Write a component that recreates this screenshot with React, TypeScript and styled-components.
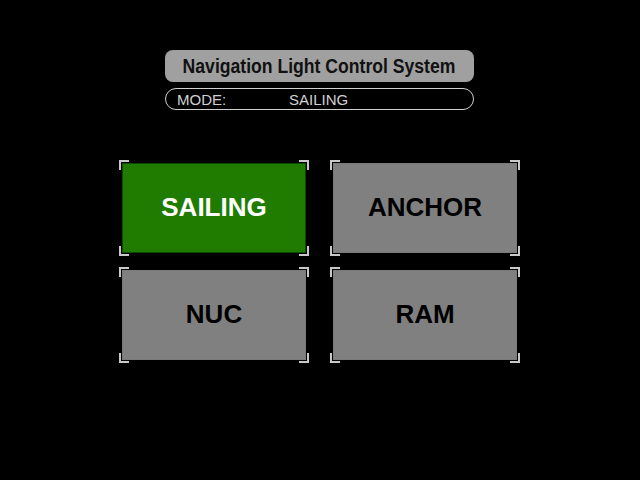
import styled, { createGlobalStyle } from "styled-components";

const GlobalStyle = createGlobalStyle`
    html, body {
        margin: 0;
        padding: 0;
        background: #000;
    }
    body {
        font-family: "Liberation Sans", Arial, sans-serif;
    }
`;

const Screen = styled.div`
    width: 640px;
    height: 480px;
    background: #000;
    display: flex;
    flex-direction: column;
    align-items: center;
    padding-top: 50px;
    box-sizing: border-box;
`;

const Header = styled.div`
    width: 309px;
    margin-right: 1px;
    display: flex;
    flex-direction: column;
    gap: 6px;
`;

const TitleBar = styled.div`
    height: 32px;
    border-radius: 8px;
    background: #a0a0a0;
    display: flex;
    align-items: center;
    justify-content: center;
    overflow: hidden;
`;

// no condensed face installed, so squeeze the bold sans
const TitleText = styled.span`
    display: inline-block;
    white-space: nowrap;
    font-family: "Liberation Sans", Arial, sans-serif;
    font-weight: 700;
    font-size: 20px;
    color: #111;
    transform: scaleX(0.88);
`;

const ModeBar = styled.div`
    height: 22px;
    box-sizing: border-box;
    border: 1px solid #d0d0d0;
    border-radius: 11px;
    display: flex;
    align-items: center;
    padding-left: 11px;
    font-size: 15px;
    color: #d0d0d0;
`;

const ModeLabel = styled.span`
    width: 112px;
`;

const Grid = styled.div`
    margin-top: 50px;
    margin-right: 1px;
    display: grid;
    grid-template-columns: 190px 190px;
    grid-auto-rows: 96px;
    column-gap: 21px;
    row-gap: 11px;
`;

const bracket = "linear-gradient(#c8c8c8, #c8c8c8)";

const Cell = styled.div`
    padding: 3px;
    display: flex;
    background:
        ${bracket} top left / 10px 2px no-repeat,
        ${bracket} top left / 2px 10px no-repeat,
        ${bracket} top right / 10px 2px no-repeat,
        ${bracket} top right / 2px 10px no-repeat,
        ${bracket} bottom left / 10px 2px no-repeat,
        ${bracket} bottom left / 2px 10px no-repeat,
        ${bracket} bottom right / 10px 2px no-repeat,
        ${bracket} bottom right / 2px 10px no-repeat;
`;

const ModeButton = styled.button<{ active: boolean }>`
    flex: 1;
    margin: 0;
    border: 1px solid ${props => props.active ? '#0c4a00' : '#7a7a7a'};
    background: ${props => props.active ? '#1f7c00' : '#808080'};
    color: ${props => props.active ? '#fff' : '#000'};
    font-family: "Liberation Sans", Arial, sans-serif;
    font-weight: 700;
    font-size: 26px;
    display: flex;
    align-items: center;
    justify-content: center;
    padding: 0 0 2px 0;
    cursor: pointer;
`;

const modes = ["SAILING", "ANCHOR", "NUC", "RAM"];

const App = () => {
    const current = "SAILING";
    return (
        <>
            <GlobalStyle />
            <Screen>
                <Header>
                    <TitleBar>
                        <TitleText>Navigation Light Control System</TitleText>
                    </TitleBar>
                    <ModeBar>
                        <ModeLabel>MODE:</ModeLabel>
                        <span>{current}</span>
                    </ModeBar>
                </Header>
                <Grid>
                    {modes.map(mode => (
                        <Cell key={mode}>
                            <ModeButton active={mode === current}>{mode}</ModeButton>
                        </Cell>
                    ))}
                </Grid>
            </Screen>
        </>
    );
};

export default App;
